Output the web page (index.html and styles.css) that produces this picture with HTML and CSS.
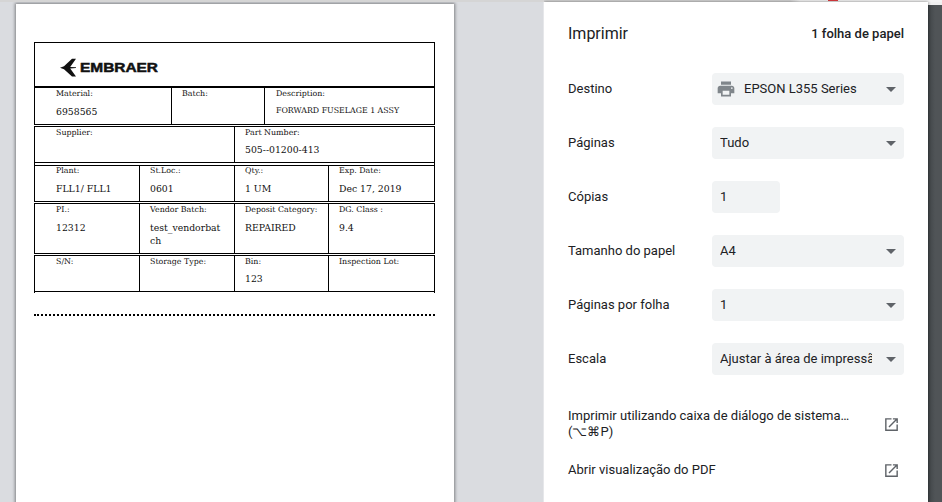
FILE: index.html
```html
<!DOCTYPE html>
<html lang="pt">
<head>
<meta charset="utf-8">
<title>Imprimir</title>
<link rel="stylesheet" href="styles.css">
</head>
<body>
<div class="app">
  <div class="topstrip"><span class="badge"></span></div>
  <main class="preview">
    <div class="sheet">
      <div class="label">
        <div class="brand">
          <svg width="100" height="20" viewBox="0 0 100 20">
            <path d="M0 9.7L4 8.2L12 0.8H16L10.2 8.9L16 9.3V10.1L10.2 10.5L16 18.6H12L4 11.2Z" fill="#111"/>
            <text x="20" y="14" textLength="78" lengthAdjust="spacingAndGlyphs" class="wordmark">EMBRAER</text>
          </svg>
        </div>
        <div class="row r1">
          <div class="cell"><p class="name">Material:</p><p class="val">6958565</p></div>
          <div class="cell batch"><p class="name">Batch:</p></div>
          <div class="cell desc"><p class="name">Description:</p><p class="val small">FORWARD FUSELAGE 1 ASSY</p></div>
        </div>
        <div class="row r2">
          <div class="cell"><p class="name">Supplier:</p></div>
          <div class="cell"><p class="name">Part Number:</p><p class="val">505--01200-413</p></div>
        </div>
        <div class="joint"></div>
        <div class="row r3 four">
          <div class="cell"><p class="name">Plant:</p><p class="val">FLL1/ FLL1</p></div>
          <div class="cell"><p class="name">St.Loc.:</p><p class="val">0601</p></div>
          <div class="cell"><p class="name">Qty.:</p><p class="val">1 UM</p></div>
          <div class="cell"><p class="name">Exp. Date:</p><p class="val">Dec 17, 2019</p></div>
        </div>
        <div class="row r4 four">
          <div class="cell"><p class="name">PI.:</p><p class="val">12312</p></div>
          <div class="cell"><p class="name">Vendor Batch:</p><p class="val">test_vendorbat<br>ch</p></div>
          <div class="cell"><p class="name">Deposit Category:</p><p class="val">REPAIRED</p></div>
          <div class="cell"><p class="name">DG. Class :</p><p class="val">9.4</p></div>
        </div>
        <div class="row r5 four">
          <div class="cell"><p class="name">S/N:</p></div>
          <div class="cell"><p class="name">Storage Type:</p></div>
          <div class="cell"><p class="name">Bin:</p><p class="val">123</p></div>
          <div class="cell"><p class="name">Inspection Lot:</p></div>
        </div>
        <div class="joint end"></div>
        <div class="cut"></div>
      </div>
    </div>
  </main>
  <aside class="panel">
    <header class="head"><h1>Imprimir</h1><span class="count">1 folha de papel</span></header>
    <div class="setting"><span>Destino</span>
      <div class="select dest">
        <svg class="printer" width="20" height="20" viewBox="0 0 24 24"><path fill="#80868b" d="M19 8H5c-1.66 0-3 1.34-3 3v6h4v4h12v-4h4v-6c0-1.66-1.34-3-3-3zm-3 11H8v-5h8v5zm3-7c-.55 0-1-.45-1-1s.45-1 1-1 1 .45 1 1-.45 1-1 1zm-1-9H6v4h12V3z"/></svg>
        <span class="choice">EPSON L355 Series</span><i class="arrow"></i></div></div>
    <div class="setting"><span>Páginas</span><div class="select"><span class="choice">Tudo</span><i class="arrow"></i></div></div>
    <div class="setting"><span>Cópias</span><div class="select number"><span class="choice">1</span></div></div>
    <div class="setting"><span>Tamanho do papel</span><div class="select"><span class="choice">A4</span><i class="arrow"></i></div></div>
    <div class="setting"><span>Páginas por folha</span><div class="select"><span class="choice">1</span><i class="arrow"></i></div></div>
    <div class="setting"><span>Escala</span><div class="select"><span class="choice">Ajustar à área de impressão</span><i class="arrow"></i></div></div>
    <div class="link system"><span>Imprimir utilizando caixa de diálogo de sistema…<br>(⌥⌘P)</span>
      <svg width="17" height="17" viewBox="0 0 24 24"><path fill="#5f6368" d="M19 19H5V5h7V3H3v18h18v-9h-2v7zM14 3v2h3.59l-9.83 9.83 1.41 1.41L19 6.41V10h2V3h-7z"/></svg></div>
    <div class="link"><span>Abrir visualização do PDF</span>
      <svg width="17" height="17" viewBox="0 0 24 24"><path fill="#5f6368" d="M19 19H5V5h7V3H3v18h18v-9h-2v7zM14 3v2h3.59l-9.83 9.83 1.41 1.41L19 6.41V10h2V3h-7z"/></svg></div>
  </aside>
  <div class="behind"></div>
</div>
</body>
</html>
```

FILE: styles.css
```css
* { box-sizing: border-box; }
body, p, h1 { margin: 0; }
body { overflow: hidden; }
.app {
  display: grid;
  grid-template: 2px 500px / 544px 384px 14px;
  width: 942px;
  height: 502px;
}
.topstrip {
  grid-column: 1 / -1;
  background: linear-gradient(90deg, #d5d5d5 790px, #f4f4f4 800px);
  padding-left: 828px;
}
.badge { display: block; width: 10px; height: 1px; background: #dd3c40; }

.preview {
  background: #dadce0;
  border-right: 1px solid #e6e7ea;
  padding: 2px 0 0 16px;
  overflow: hidden;
}
.sheet {
  width: 438px;
  height: 520px;
  background: #fff;
  box-shadow: 0 0 3px 1px rgba(0, 0, 0, .42);
  padding: 38px 0 0 18px;
}
.label {
  width: 401px;
  font-family: "DejaVu Serif", serif;
  color: #111;
}
.brand {
  height: 46px;
  border: 1px solid #000;
  border-bottom-width: 2px;
  padding: 15px 0 0 25px;
}
.brand svg { display: block; }
.wordmark {
  font: bold 12.6px "Liberation Sans", sans-serif;
  fill: #111;
  stroke: #111;
  stroke-width: .5px;
}
.row {
  display: grid;
  border: 1px solid #000;
  margin-top: 1px;
}
.four { grid-template-columns: 104px 95px 94px 106px; }
.r1 { grid-template-columns: 136px 93px 170px; height: 37px; border-top: 0; margin-top: 0; }
.r2 { grid-template-columns: 199px 200px; height: 37px; }
.r3 { height: 37px; margin-top: 0; }
.r4 { height: 51px; }
.r5 { height: 37px; }
.joint { height: 2px; border: solid #000; border-width: 0 1px; }
.end { height: 1px; }
.cell { padding-left: 10px; border-left: 1px solid #000; min-width: 0; }
.cell:first-child { padding-left: 21px; border-left: 0; }
.cell.desc { padding-left: 11px; }
.name { font-size: 7.9px; line-height: 10px; height: 17px; white-space: nowrap; }
.val { font-size: 9.3px; line-height: 13px; white-space: nowrap; }
.small { font-size: 7.85px; line-height: 11px; }
.r1 .name, .r2 .name, .r4 .name, .r5 .name { padding-top: 1px; }
.r2 .val, .r3 .val, .r5 .val { margin-top: -1px; }
.cut { margin-top: 21px; border-top: 2px dotted #000; }

.panel {
  background: #fff;
  padding: 0 24px;
  font: 13px/16px Roboto, sans-serif;
  color: #202124;
  box-shadow: 0 0 3px rgba(0, 0, 0, .5);
  clip-path: inset(-2px -3px 0 0);
  z-index: 1;
}
.head {
  display: flex;
  justify-content: space-between;
  align-items: center;
  height: 60px;
  padding-top: 4px;
}
h1 { font-size: 16px; font-weight: 400; }
.count { font-size: 13px; font-weight: 500; }
.setting {
  display: flex;
  justify-content: space-between;
  align-items: center;
  height: 54px;
}
.select {
  display: flex;
  align-items: center;
  width: 192px;
  height: 32px;
  padding: 0 8px;
  background: #f1f3f4;
  border-radius: 4px;
}
.dest { padding-left: 4px; }
.printer { margin-right: 8px; flex: none; }
.dest .choice { width: 128px; }
.choice { width: 152px; overflow: hidden; white-space: nowrap; }
.arrow {
  margin-left: auto;
  border: 5px solid transparent;
  border-top-color: #5f6368;
  border-bottom: 0;
}
.number { width: 68px; margin-right: 124px; }
.link {
  display: flex;
  justify-content: space-between;
  align-items: center;
  height: 32px;
  padding-right: 4px;
}
.system { height: 60px; margin-top: 8px; }
.behind {
  background: linear-gradient(90deg, #3f4447, #505457 7px);
  border-top: 3px solid #f0f0f0;
}
```
